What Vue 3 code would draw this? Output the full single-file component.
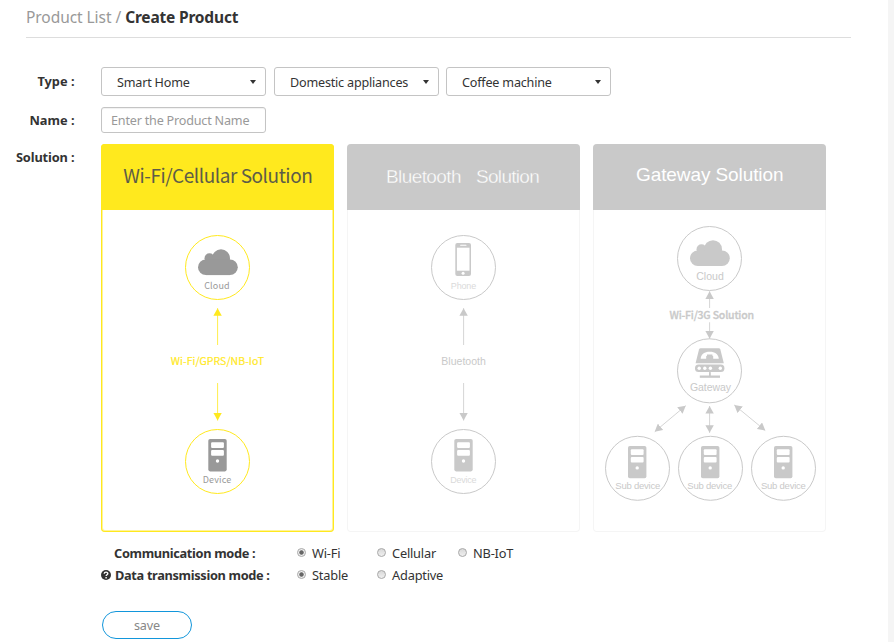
<script setup>
import { ref } from 'vue'

const selects = [
  { name: 'home', label: 'Smart Home' },
  { name: 'domestic', label: 'Domestic appliances' },
  { name: 'coffee', label: 'Coffee machine' },
]
const communication = ref('Wi-Fi')
const transmission = ref('Stable')
const productName = ref('')
const subDevices = [
  { icon: 35, circle: 44.5, label: 22.7 },
  { icon: 108, circle: 117.5, label: 94.7 },
  { icon: 181, circle: 190.5, label: 168.3 },
]
</script>

<template>
  <div class="page">
    <main class="content">
      <header class="crumbs">
        <span class="parent">Product List /</span><strong>Create Product</strong>
      </header>

      <div class="row type-row">
        <label class="label">Type :</label>
        <div class="selects">
          <button v-for="s in selects" :key="s.name" class="select" :class="s.name">
            <span>{{ s.label }}</span><i class="caret"></i>
          </button>
        </div>
      </div>

      <div class="row name-row">
        <label class="label">Name :</label>
        <input v-model="productName" class="input" placeholder="Enter the Product Name" />
      </div>

      <div class="row solution-row">
        <label class="label wide">Solution :</label>
        <div class="cards">
          <svg class="defs" width="0" height="0" aria-hidden="true">
            <defs>
              <marker id="tip-yellow" viewBox="0 0 8 8" preserveAspectRatio="none" refX="8" refY="4" markerWidth="7.6" markerHeight="8.4" markerUnits="userSpaceOnUse" orient="auto-start-reverse"><path d="M0 0L8 4L0 8Z" fill="#ffe91e" /></marker>
              <marker id="tip-gray" viewBox="0 0 8 8" preserveAspectRatio="none" refX="8" refY="4" markerWidth="7.6" markerHeight="8.4" markerUnits="userSpaceOnUse" orient="auto-start-reverse"><path d="M0 0L8 4L0 8Z" fill="#c9c9c9" /></marker>
              <symbol id="cloud" viewBox="0 0 40 26" overflow="visible">
                <circle cx="7.8" cy="18" r="7.8" /><circle cx="11.5" cy="9" r="5" /><circle cx="23" cy="9" r="9" /><circle cx="32" cy="18" r="7.8" /><path d="M7.8 10H32V25.8H7.8Z" />
              </symbol>
              <symbol id="device" viewBox="0 0 18.4 32.4" overflow="visible">
                <rect width="18.4" height="32.4" rx="1.8" />
                <g fill="#fff"><rect x="2.8" y="3.3" width="12.8" height="5.8" rx="1" /><rect x="2.8" y="11" width="12.8" height="5.7" rx="1" /><circle cx="9.2" cy="22" r="1.7" /></g>
              </symbol>
            </defs>
          </svg>

          <article class="card active">
            <svg viewBox="0 -66 233 388" width="233" height="388">
              <rect class="head" y="-66" width="233" height="66" />
              <text class="title cjk" x="22.3" y="-27.3" textLength="189.5">Wi-Fi/Cellular Solution</text>
              <circle class="ring" cx="116.5" cy="57.5" r="32" />
              <use href="#cloud" x="97" y="39.3" width="40" height="26" />
              <text class="cap cjk" x="103.2" y="78.7" textLength="25.4">Cloud</text>
              <path class="line tip-end" d="M116.6 135V98.2" />
              <path class="line tip-end" d="M116.6 173V210.5" />
              <text class="link cjk" x="69.8" y="154.7" textLength="93.2">Wi-Fi/GPRS/NB-IoT</text>
              <circle class="ring" cx="116.5" cy="251.5" r="32" />
              <use href="#device" x="107.3" y="229" width="18.4" height="32.4" />
              <text class="cap cjk" x="101.7" y="273.3" textLength="28.6">Device</text>
            </svg>
          </article>

          <article class="card">
            <svg viewBox="0 -66 233 388" width="233" height="388">
              <rect class="head" y="-66" width="233" height="66" />
              <text class="title thin" x="39" y="-27.3" textLength="75.5">Bluetooth</text>
              <text class="title thin" x="129" y="-27.3" textLength="63.8">Solution</text>
              <circle class="ring" cx="116.5" cy="57.5" r="32" />
              <g transform="translate(108.3 33)">
                <rect width="15.7" height="33" rx="2" />
                <rect x="1.6" y="4.7" width="12.6" height="23" fill="#fff" />
                <rect x="4.8" y="1.8" width="6.4" height="1" rx=".5" fill="#fff" />
                <circle cx="7.8" cy="30.3" r="1.5" fill="#fff" />
              </g>
              <text class="cap pale" x="103.8" y="78.7" textLength="25.4">Phone</text>
              <path class="line tip-end" d="M116.6 135V98.2" />
              <path class="line tip-end" d="M116.6 173V210.5" />
              <text class="link" x="94.3" y="154.7" textLength="44.5">Bluetooth</text>
              <circle class="ring" cx="116.5" cy="251.5" r="32" />
              <use href="#device" x="107.3" y="229" width="18.4" height="32.4" />
              <text class="cap pale" x="103.2" y="272.7" textLength="26.4">Device</text>
            </svg>
          </article>

          <article class="card">
            <svg viewBox="0 -66 233 388" width="233" height="388">
              <rect class="head" y="-66" width="233" height="66" />
              <text class="title" x="43" y="-29.3" textLength="147.5">Gateway Solution</text>
              <circle class="ring" cx="116.5" cy="48.5" r="32" />
              <use href="#cloud" x="97" y="30.2" width="40" height="26" />
              <text class="sub" x="103.2" y="70" textLength="27.6">Cloud</text>
              <path class="line tip-end" d="M116.6 98V81.3" />
              <path class="line tip-end" d="M116.6 112.3V128.7" />
              <text class="link cjk bold" x="76.5" y="109" textLength="84.5">Wi-Fi/3G Solution</text>
              <circle class="ring" cx="116.5" cy="160.8" r="32" />
              <g transform="translate(102 138.3)">
                <path d="M5.7 0H23.7Q25 0 25.4 1.3L28.8 15H.6L4 1.3Q4.4 0 5.7 0Z" />
                <path d="M5.7 10.5C6 5.5 9.5 3.4 14.7 3.4S23.4 5.5 23.8 10.5H18.2V8Q18.2 7.4 17.4 7.4V6.2H12V7.4Q11.2 7.4 11.2 8V10.5Z" fill="#fff" />
                <rect y="16.2" width="29.4" height="7.6" rx="3.5" />
                <g fill="#fff"><circle cx="4.2" cy="20" r="1.7" /><circle cx="9.8" cy="20" r="1.7" /><circle cx="15.4" cy="20" r="1.7" /><circle cx="25.3" cy="20" r="1.7" /></g>
                <rect x="14" y="23.8" width="1.8" height="4" /><rect x="4.8" y="27.2" width="20.2" height="2.3" />
              </g>
              <text class="sub" x="97" y="180.5" textLength="41">Gateway</text>
              <path class="line both" d="M92.7 195.7L61.7 221.7" />
              <path class="line both" d="M116.6 196V222.8" />
              <path class="line both" d="M141.3 195L172.3 220.5" />
              <g v-for="d in subDevices" :key="d.icon">
                <circle class="ring" :cx="d.circle" cy="258.3" r="32" />
                <use href="#device" :x="d.icon" y="235.9" width="18.4" height="32.4" />
                <text class="sub small" :x="d.label - 0.4" y="278.7" textLength="45">Sub device</text>
              </g>
            </svg>
          </article>
        </div>
      </div>

      <div class="modes">
        <div class="mode comm">
          <span class="mode-label">Communication mode :</span>
          <label class="opt first"><input v-model="communication" type="radio" value="Wi-Fi" /><span>Wi-Fi</span></label>
          <label class="opt second"><input v-model="communication" type="radio" value="Cellular" /><span>Cellular</span></label>
          <label class="opt"><input v-model="communication" type="radio" value="NB-IoT" /><span>NB-IoT</span></label>
        </div>
        <div class="mode trans">
          <svg class="help" viewBox="0 0 10 10" width="10" height="10"><circle cx="5" cy="5" r="5" fill="#333" /><path d="M3.2 3.8C3.3 1.6 6.8 1.6 6.8 3.6C6.8 4.8 5.1 4.8 5.1 6.1M5.1 7.1V8.4" fill="none" stroke="#fff" stroke-width="1.4" /></svg>
          <span class="mode-label">Data transmission mode :</span>
          <label class="opt first"><input v-model="transmission" type="radio" value="Stable" /><span>Stable</span></label>
          <label class="opt second"><input v-model="transmission" type="radio" value="Adaptive" /><span>Adaptive</span></label>
        </div>
      </div>

      <button class="save">save</button>
    </main>
    <div class="gutter"></div>
  </div>
</template>

<style>
body { background: #fff; overflow: hidden; }
</style>

<style scoped>
* { box-sizing: border-box; }
.page { display: flex; width: 894px; height: 642px; font: 13px/20px "Noto Sans", sans-serif; color: #333; white-space: nowrap; }
.content { width: 888px; flex: none; }
.gutter { width: 6px; background: #f5f5f5; }
.crumbs { display: flex; gap: 4px; width: 825px; height: 38px; margin-left: 26px; padding-top: 7px; border-bottom: 1px solid #ddd; font-size: 15.5px; line-height: 21px; }
.parent { color: #999; letter-spacing: -.06px; }
.crumbs strong { letter-spacing: -.18px; }
.row { display: flex; }
.label { flex: none; width: 74.5px; margin-right: 26.5px; text-align: right; font-weight: 700; font-size: 12.8px; }
.label.wide { letter-spacing: -.12px; }
.type-row { margin-top: 29px; height: 29px; }
.type-row .label { padding-top: 4px; }
.selects { display: flex; gap: 8px; }
.select { display: flex; align-items: center; justify-content: space-between; width: 165px; height: 29px; padding: 2px 9px 0 15px; border: 1px solid #c4c4c4; border-radius: 3px; background: #fff; font: inherit; font-size: 12.6px; letter-spacing: -.2px; color: #333; }
.select.coffee { margin-left: -1px; }
.caret { border: 3.5px solid transparent; border-top: 4px solid #333; border-bottom: 0; margin-top: -2px; }
.name-row { margin-top: 11px; height: 26px; }
.name-row .label { padding-top: 3px; }
.input { width: 165px; height: 26px; padding: 0 9px; border: 1px solid #c4c4c4; border-radius: 3px; font: inherit; font-size: 12.6px; letter-spacing: -.2px; color: #333; box-shadow: inset 0 1px 1px rgba(0, 0, 0, .06); outline: 0; }
.input::placeholder { color: #999; opacity: 1; }
.solution-row { margin-top: 11px; height: 388px; }
.solution-row .label { padding-top: 3px; }
.cards { display: flex; gap: 13px; }
.defs { position: absolute; }
.card { width: 233px; height: 388px; border-radius: 4px; overflow: hidden; box-shadow: inset 0 0 0 1px #f5f5f5; --tone: #c9c9c9; --line: #c9c9c9; --tip: url(#tip-gray); }
.card.active { box-shadow: inset 0 0 0 1px #ffe91e, inset 0 0 0 2px #fff39b; --tone: #999; --line: #ffe91e; --tip: url(#tip-yellow); }
.card svg { display: block; fill: var(--tone); font-family: "Liberation Sans", sans-serif; }
.head { fill: #c9c9c9; }
.active .head { fill: #ffe91e; }
.ring { fill: none; stroke: var(--line); stroke-width: 1; }
.line { fill: none; stroke: var(--line); stroke-width: .8; marker-end: var(--tip); }
.line.both { marker-start: var(--tip); }
.title { fill: #fff; font-size: 19px; }
.title.thin { stroke: #c9c9c9; stroke-width: .35px; }
.active .title { fill: #5d5c48; }
.cjk { font-family: "Noto Sans CJK SC", sans-serif; }
.cap { font-size: 9px; }
.pale { fill: #dadada; }
.link { font-size: 10.5px; }
.active .link { fill: #ffe91e; stroke: #ffe91e; stroke-width: .2px; }
.link.bold { font-weight: 500; stroke: #c9c9c9; stroke-width: .3px; }
.sub { font-size: 10.5px; }
.sub.small { font-size: 9.5px; }
.modes { margin-top: 11px; }
.mode { display: flex; height: 22px; line-height: 20px; }
.comm { padding-left: 114px; }
.trans { padding-left: 101px; }
.mode-label { font-weight: 700; font-size: 12.8px; letter-spacing: -.34px; }
.comm .mode-label { width: 182.5px; }
.trans .mode-label { width: 181.5px; }
.help { margin: 5px 4px 0 0; flex: none; width: 10px; }
.opt { display: flex; letter-spacing: -.2px; font-size: 12.8px; }
.opt.first { width: 80px; }
.opt.second { width: 81px; }
.opt input { appearance: none; flex: none; width: 9px; height: 9px; margin: 5px 6.5px 0 0; border: 1px solid #a8a8a8; border-radius: 50%; background: linear-gradient(#d8d8d8, #f0f0f0); }
.opt input:checked { background: radial-gradient(circle, #666 0 1.8px, #eee 2.6px); }
.save { display: block; width: 90px; height: 28px; margin: 24px 0 0 102px; padding: 0; border: 1px solid #1296db; border-radius: 14px; background: #fff; font: 12.6px/27px "Noto Sans", sans-serif; letter-spacing: -.1px; color: #888; }
</style>
